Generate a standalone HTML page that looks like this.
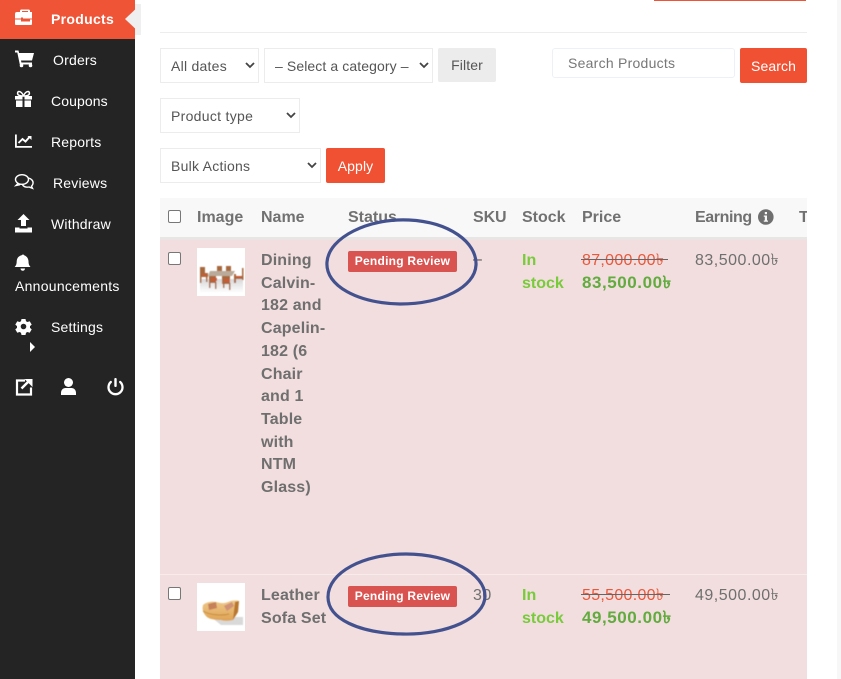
<!DOCTYPE html>
<html><head><meta charset="utf-8"><style>
html,body{margin:0;padding:0;width:841px;height:679px;overflow:hidden;background:#fff}
body{position:relative;font-family:"Liberation Sans","Noto Sans CJK SC",sans-serif;color:#6f6f6f}
.a,.t{position:absolute}
.t{white-space:nowrap;line-height:20px}
.m{color:#fff;font-size:14px;letter-spacing:.2px}
.s{position:absolute;box-sizing:border-box;background:#fff;border:1px solid #ececec;height:35px;font-size:14px;color:#555;line-height:35px;padding-left:10px;letter-spacing:.25px;white-space:nowrap}
.s svg{position:absolute;top:13px}
.b{position:absolute;background:#f05133;border-radius:2px;color:#fff;font-size:14px;text-align:center;line-height:37px;height:35px;letter-spacing:.1px}
.h{font-weight:bold;font-size:16px;color:#717171}
.n{font-weight:bold;font-size:16px;color:#6f6f6f;line-height:22.7px;white-space:nowrap;letter-spacing:.15px}
.cb{position:absolute;left:168px;width:11px;height:11px;border:1px solid #777;border-radius:2px;background:#fff}
.badge{position:absolute;left:348px;width:109px;height:21px;background:#d95351;border-radius:2px;color:#fff;font-weight:bold;font-size:12px;line-height:20px;text-align:center;letter-spacing:.25px}
.g{font-weight:bold;font-size:16px;color:#78cb3a}
.p{font-size:16px}
</style></head><body>
<div class="a" style="left:0;top:0;width:135px;height:679px;background:#242424"></div>
<div class="a" style="left:0;top:0;width:135px;height:39px;background:#f05436"></div>
<div class="a" style="left:125px;top:4px;width:0;height:0;border-top:15px solid transparent;border-bottom:15px solid transparent;border-right:16px solid #efefef"></div>
<div class="a" style="left:135px;top:4px;width:6px;height:31px;background:#efefef"></div>

<svg class="a" style="left:0;top:0" width="135" height="400" fill="#fff">
<path d="M15 14a2 2 0 0 1 2-2h3v-1a1.500 1.500 0 0 1 1.500-1.500h7A1.500 1.500 0 0 1 30 11v1h2v6.500h-9v-1h-2v1h-6zM22 12h6v-1h-6z"/>
<path d="M15 19.500h6v2h9v-2h2V24a1 1 0 0 1-1 1H16a1 1 0 0 1-1-1z"/>
<path d="M15 50.500h3.500l.6 2.500H34l-2 7.500H21l.4 2H32v2H19.800L17.300 52.500H15z"/>
<circle cx="21.500" cy="65.500" r="1.800"/><circle cx="30.500" cy="65.500" r="1.800"/>
<path d="M15 96h7.500v3.500H15zM24.500 96H32v3.500h-7.500zM16 100.500h6.500v6.500H16zM24.500 100.500H31V107h-6.500z"/>
<path d="M23.500 96c-1-3-3-4.500-4.500-4.500s-2 2.500-.5 3.500 3 1 5 1zm0 0c1-3 3-4.500 4.500-4.500s2 2.500.5 3.500-3 1-5 1z" fill="none" stroke="#fff" stroke-width="1.500"/>
<path d="M15 134.500h1.800V146H32v1.800H15z"/>
<path d="M18.500 143l4-4 3 2.500 4-4.500" fill="none" stroke="#fff" stroke-width="1.900"/><path d="M27.500 136h4v4z"/>
<g fill="none" stroke="#fff" stroke-width="1.400"><ellipse cx="22" cy="179.500" rx="6.500" ry="4.800"/><path d="M18 183.500l-2 2 4-.8"/><path d="M28.500 178c3 .8 5 3 4.500 5.500-.3 1.500-1 2-1.500 2.800l1 2-3.500-1.300c-2.500.5-5-.3-6.500-2"/></g>
<path d="M23.500 214l6 6h-3.500v6h-5v-6h-3.500z"/><path d="M15 227.500h4.500v1h8v-1H32v5H15z"/>
<path d="M22.500 255a1.300 1.300 0 0 1 2 0c0 .5 4 1 4.500 6 0 4 1 4.500 2 6H15.200c1-1.500 2-2 2-6 .5-5 4.500-5.500 5.300-6zM21 268.500h4.500a2.200 2.200 0 0 1-4.500 0z" transform="translate(-.5 0)"/>
<path fill-rule="evenodd" d="M21.500 319h4l.5 2.200 1.500.8 2.200-.8 2 3.400-1.700 1.500v1.800l1.700 1.500-2 3.400-2.200-.8-1.500.8-.5 2.200h-4l-.5-2.200-1.500-.8-2.200.8-2-3.400 1.700-1.500v-1.800l-1.700-1.500 2-3.400 2.200.8 1.500-.8zM23.500 323.700a2.800 2.800 0 1 0 0 5.600 2.800 2.800 0 0 0 0-5.600z"/>
<path d="M30 342l5 5-5 5z"/>
<path d="M25 380.500h-8v14h14v-7" fill="none" stroke="#fff" stroke-width="2.200"/><path d="M21.500 388.500l8-8" stroke="#fff" stroke-width="2.500"/><path d="M24.500 379H32.500V387z"/>
<circle cx="68.500" cy="382.500" r="4.500"/><path d="M61 395v-2c0-3 2-5 4.500-5h6c2.500 0 4.500 2 4.500 5v2z"/>
<path d="M110.800 382a7 7 0 1 0 9.400 0" fill="none" stroke="#fff" stroke-width="2.300" stroke-linecap="round"/><rect x="114.300" y="378" width="2.400" height="9" rx="1"/>
</svg>

<div class="t" style="left:51px;top:9px;color:#fff;font-weight:bold;font-size:14px;letter-spacing:.3px">Products</div>
<div class="t m" style="left:53px;top:50px">Orders</div>
<div class="t m" style="left:51px;top:91px;letter-spacing:.1px">Coupons</div>
<div class="t m" style="left:51px;top:132px">Reports</div>
<div class="t m" style="left:53px;top:173px">Reviews</div>
<div class="t m" style="left:51px;top:214px">Withdraw</div>
<div class="t m" style="left:15px;top:276px;letter-spacing:.27px">Announcements</div>
<div class="t m" style="left:51px;top:317px">Settings</div>

<div class="a" style="left:654px;top:0;width:152px;height:1px;background:#f05436"></div>
<div class="a" style="left:160px;top:32px;width:647px;height:1px;background:#ededed"></div>
<div class="a" style="left:837px;top:0;width:4px;height:679px;background:#f7f7f7"></div>

<div class="s" style="left:160px;top:48px;width:99px">All dates<svg style="left:84px" width="10" height="7"><path d="M1 1l4 4 4-4" fill="none" stroke="#444" stroke-width="1.800"/></svg></div>
<div class="s" style="left:264px;top:48px;width:169px;letter-spacing:.1px">– Select a category –<svg style="left:154px" width="10" height="7"><path d="M1 1l4 4 4-4" fill="none" stroke="#444" stroke-width="1.800"/></svg></div>
<div class="a" style="left:438px;top:48px;width:58px;height:34px;background:#ececec;border-radius:2px;font-size:14px;text-align:center;line-height:35px;color:#555;letter-spacing:.1px">Filter</div>
<div class="a" style="left:552px;top:48px;width:183px;height:30px;box-sizing:border-box;border:1px solid #edf1f5;border-radius:3px;font-size:14px;line-height:28px;padding-left:15px;color:#777;letter-spacing:.25px;white-space:nowrap">Search Products</div>
<div class="b" style="left:740px;top:48px;width:67px">Search</div>
<div class="s" style="left:160px;top:98px;width:140px;letter-spacing:.3px">Product type<svg style="left:125px" width="10" height="7"><path d="M1 1l4 4 4-4" fill="none" stroke="#444" stroke-width="1.800"/></svg></div>
<div class="s" style="left:160px;top:148px;width:161px">Bulk Actions<svg style="left:146px" width="10" height="7"><path d="M1 1l4 4 4-4" fill="none" stroke="#444" stroke-width="1.800"/></svg></div>
<div class="b" style="left:326px;top:148px;width:59px">Apply</div>

<div class="a" style="left:160px;top:198px;width:647px;height:39px;background:#f8f8f8"></div>
<div class="a" style="left:160px;top:237px;width:647px;height:3px;background:#e9e5e5"></div>
<div class="a" style="left:160px;top:240px;width:647px;height:439px;background:#f2dede"></div>
<div class="a" style="left:160px;top:574px;width:647px;height:1px;background:#f6ecec"></div>

<div class="cb" style="top:210px"></div>
<div class="t h" style="left:197px;top:208px">Image</div>
<div class="t h" style="left:261px;top:208px">Name</div>
<div class="t h" style="left:348px;top:208px">Status</div>
<div class="t h" style="left:473px;top:208px;letter-spacing:-.1px">SKU</div>
<div class="t h" style="left:522px;top:208px">Stock</div>
<div class="t h" style="left:582px;top:208px">Price</div>
<div class="t h" style="left:695px;top:208px;letter-spacing:-.4px">Earning</div>
<svg class="a" style="left:758px;top:209px" width="16" height="16"><circle cx="7.800" cy="8" r="7.800" fill="#6f6f6f"/><rect x="6.800" y="3" width="2.200" height="2.200" fill="#f8f8f8"/><path d="M5.800 6.500h3.200v5h1v1.300H5.800v-1.300h1v-3.700h-1z" fill="#f8f8f8"/></svg>
<div class="a h" style="left:799px;top:208px;width:8px;overflow:hidden;line-height:20px">T</div>

<div class="cb" style="top:252px"></div>
<div class="a" style="left:197px;top:248px;width:48px;height:48px;background:#fff"></div>
<svg class="a" style="left:197px;top:248px" width="48" height="48">
<defs><linearGradient id="sh" x1="0" y1="0" x2="0" y2="1"><stop offset="0" stop-color="#d8d8d8"/><stop offset="1" stop-color="#fff"/></linearGradient><filter id="bl" x="-10%" y="-10%" width="120%" height="120%"><feGaussianBlur stdDeviation=".45"/></filter></defs>
<g filter="url(#bl)">
<rect x="3" y="31" width="43" height="14" fill="url(#sh)"/>
<path d="M13 23h25l-3 5H11z" fill="#b9aa9a"/>
<g fill="#a8683c"><rect x="3" y="19" width="5" height="6"/><rect x="3" y="25" width="8" height="4"/><rect x="3" y="28" width="1.500" height="7"/><rect x="9" y="28" width="1.500" height="6"/>
<rect x="20" y="18" width="5" height="5"/><rect x="29" y="18" width="5" height="5"/>
<rect x="12" y="28" width="7" height="7"/><rect x="12" y="34" width="1.500" height="6"/><rect x="18" y="34" width="1.500" height="7"/>
<rect x="25" y="28" width="8" height="8"/><rect x="26" y="35" width="1.500" height="5"/><rect x="32" y="35" width="1.500" height="7"/>
<rect x="37" y="26" width="2" height="9"/><rect x="45" y="20" width="1.500" height="12"/><rect x="38" y="28" width="7" height="3"/></g>
<rect x="5" y="26" width="5" height="2" fill="#c85a35"/><rect x="14" y="30" width="6" height="3" fill="#c85a35"/><rect x="27" y="31" width="6" height="3" fill="#c85a35"/><rect x="39" y="28" width="5" height="2" fill="#c85a35"/>
</g>
</svg>
<div class="a n" style="left:261px;top:250px">Dining<br>Calvin-<br>182 and<br>Capelin-<br>182 (6<br>Chair<br>and 1<br>Table<br>with<br>NTM<br>Glass)</div>
<div class="badge" style="top:251px">Pending Review</div>
<div class="t p" style="left:473px;top:250px;color:#555">–</div>
<div class="a g" style="left:522px;top:248.500px;line-height:23px">In<br>stock</div>
<div class="t p" style="left:582px;top:251px;color:#e8593c;letter-spacing:.3px">87,000.00৳</div>
<div class="a" style="left:581px;top:259px;width:87px;height:1px;background:#666"></div>
<div class="t" style="left:582px;top:273px;font-weight:bold;font-size:17px;color:#62ab3f;letter-spacing:.55px">83,500.00৳</div>
<div class="t p" style="left:695px;top:251px;letter-spacing:.5px">83,500.00৳</div>

<div class="cb" style="top:587px"></div>
<div class="a" style="left:197px;top:583px;width:48px;height:48px;background:#fff"></div>
<svg class="a" style="left:197px;top:583px" width="48" height="48">
<defs><linearGradient id="so" x1="0" y1="0" x2="0" y2="1"><stop offset="0" stop-color="#eec98a"/><stop offset="1" stop-color="#dfa354"/></linearGradient></defs>
<g filter="url(#bl)">
<path d="M14 34h32v8H24z" fill="#d9d9d9"/>
<path d="M6 22c3-3 9-4 13-3 4 1 7 2 12 0 4-2 9-2 11-1l-1 11-5 8c-5 1-9 1-12 0-6 0-13-1-15-4-3-3-4-7-3-11z" fill="url(#so)"/>
<path d="M11 21l8-2 1 6-8 2z" fill="#c6805a"/><path d="M27 23l8-4 2 4-7 5z" fill="#d09176"/>
<path d="M6 28c6 4 19 5 26 3" fill="none" stroke="#c68a3c" stroke-width="1"/><path d="M38 19l4-1-1 11-5 8z" fill="#b9762f"/>
</g>
</svg>
<div class="a n" style="left:261px;top:585px">Leather<br>Sofa Set</div>
<div class="badge" style="top:586px">Pending Review</div>
<div class="t p" style="left:473px;top:586px;letter-spacing:.5px">30</div>
<div class="a g" style="left:522px;top:583.500px;line-height:23px">In<br>stock</div>
<div class="t p" style="left:582px;top:586px;color:#e8593c;letter-spacing:.3px">55,500.00৳</div>
<div class="a" style="left:581px;top:594px;width:89px;height:1px;background:#666"></div>
<div class="t" style="left:582px;top:608px;font-weight:bold;font-size:17px;color:#62ab3f;letter-spacing:.55px">49,500.00৳</div>
<div class="t p" style="left:695px;top:586px;letter-spacing:.5px">49,500.00৳</div>

<svg class="a" style="left:0;top:0;pointer-events:none" width="841" height="679" fill="none" stroke="#43528f" stroke-width="3.200">
<path d="M327 262c2-25 42-44 82-42 40 2 68 22 67 45-1 22-34 39-76 39-42-1-75-18-73-42z"/>
<path d="M328 597c0-25 36-43 78-43 44 0 79 20 79 42 0 22-38 39-82 38-44-1-75-15-75-37z"/>
</svg>
</body></html>
